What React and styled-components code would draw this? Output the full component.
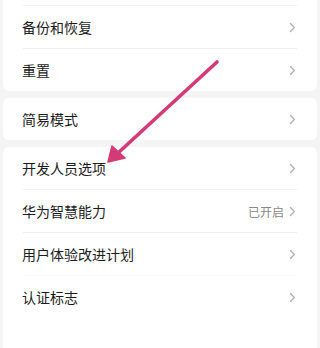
import React from 'react';
import styled, { createGlobalStyle } from 'styled-components';

const GlobalStyle = createGlobalStyle`
  html, body {
    margin: 0;
    padding: 0;
    background: #f4f4f4;
  }
  body {
    font-family: "Noto Sans CJK SC", "Noto Sans", sans-serif;
  }
`;

// grey page with white cards, like the phone settings list
const Page = styled.div`
  position: relative;
  width: 320px;
  height: 348px;
  overflow: hidden;
  box-sizing: border-box;
  padding: 0 3px;
  background: #f4f4f4;
  display: flex;
  flex-direction: column;
  gap: 7px;
`;

const Card = styled.div`
  background: #fff;
  border-radius: ${(p) => (p.$cutTop ? '0 0 6px 6px' : '6px')};
  padding-top: ${(p) => (p.$cutTop ? '5px' : '0')};
  padding-bottom: ${(p) => p.$padBottom || '0'};
  display: flex;
  flex-direction: column;
`;

const Divider = styled.div`
  height: 1px;
  margin: 0 20px;
  background: ${(p) => (p.$faint ? '#fafafa' : '#efefef')};
`;

const Row = styled.div`
  height: 42px;
  display: flex;
  align-items: center;
  padding: 0 21px 0 19px;
`;

const Label = styled.span`
  flex: 1;
  font-size: 14px;
  color: #1c1c1c;
`;

const Value = styled.span`
  font-size: 12px;
  color: #888;
  margin-right: 5px;
`;

const Chevron = () => (
  <svg width="7" height="11" viewBox="0 0 7 11">
    <path
      d="M1.5 1.5 L5.3 5.5 L1.5 9.5"
      fill="none"
      stroke="#b4b4b4"
      strokeWidth="1.4"
      strokeLinecap="round"
      strokeLinejoin="round"
    />
  </svg>
);

// the pink arrow lies over the list
const Overlay = styled.svg`
  position: absolute;
  left: 0;
  top: 0;
  pointer-events: none;
`;

const Item = ({ label, value }) => (
  <Row>
    <Label>{label}</Label>
    {value && <Value>{value}</Value>}
    <Chevron />
  </Row>
);

const App = () => (
  <>
    <GlobalStyle />
    <Page>
      <Card $cutTop>
        <Divider />
        <Item label="备份和恢复" />
        <Divider />
        <Item label="重置" />
      </Card>
      <Card>
        <Item label="简易模式" />
      </Card>
      <Card $padBottom="40px">
        <Item label="开发人员选项" />
        <Divider />
        <Item label="华为智慧能力" value="已开启" />
        <Divider />
        <Item label="用户体验改进计划" />
        <Divider $faint />
        <Item label="认证标志" />
      </Card>
      <Overlay width="320" height="348" viewBox="0 0 320 348">
        <line
          x1="217"
          y1="62"
          x2="118"
          y2="153"
          stroke="#d33a76"
          strokeWidth="3.6"
          strokeLinecap="round"
        />
        <polygon points="108,162 112,146 125,158" fill="#d33a76" strokeLinejoin="round" stroke="#d33a76" strokeWidth="1.5" />
      </Overlay>
    </Page>
  </>
);

export default App;
